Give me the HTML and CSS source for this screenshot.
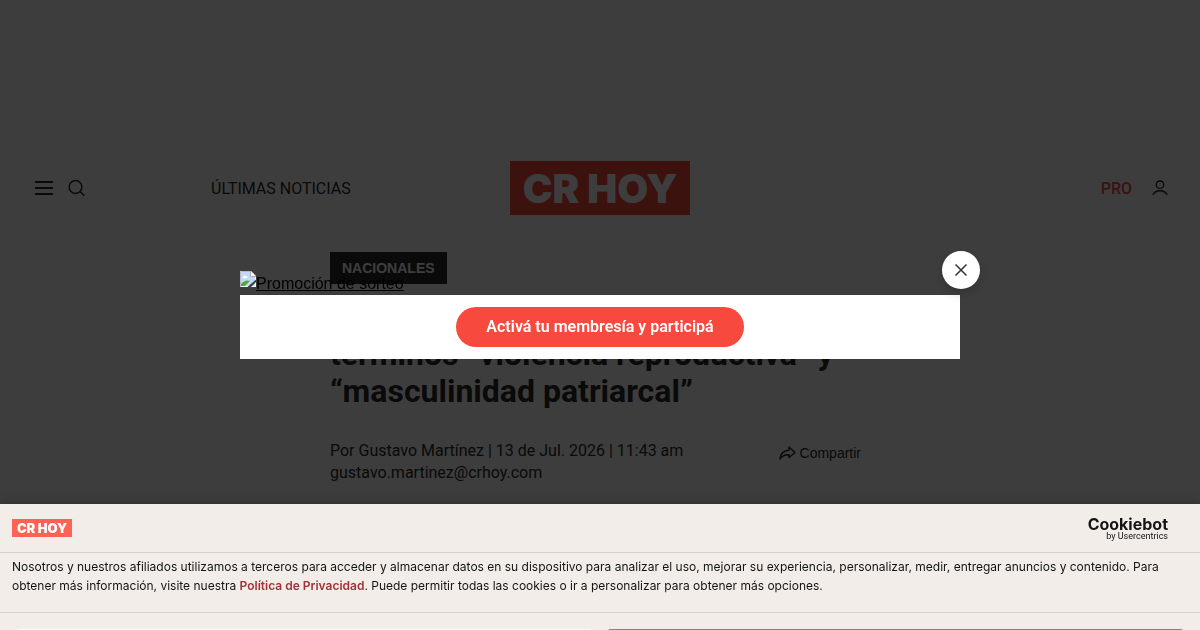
FILE: index.html
```html
<!DOCTYPE html>
<html lang="es">
<head>
<title>CR Hoy</title>
<meta charset="utf-8">
<meta name="viewport" content="width=device-width, initial-scale=1">
<link rel="stylesheet" href="styles.css">
</head>
<body>

<header class="site-header">
  <div class="header-left">
    <button class="icon-btn" type="button" aria-label="Menú">
      <svg width="18" height="16" viewBox="0 0 18 16"><path d="M0 2h18M0 8h18M0 14h18" stroke="currentColor" stroke-width="2"/></svg>
    </button>
    <button class="icon-btn" type="button" aria-label="Buscar">
      <svg width="18" height="18" viewBox="0 0 18 18" fill="none" stroke="currentColor" stroke-width="1.500"><circle cx="7.500" cy="8" r="6.400"/><path d="M12 12.500l4.300 4.300"/></svg>
    </button>
    <a class="nav-link" href="#">ÚLTIMAS NOTICIAS</a>
  </div>
  <a class="logo" href="#">CR HOY</a>
  <div class="header-right">
    <a class="pro" href="#">PRO</a>
    <button class="icon-btn" type="button" aria-label="Mi cuenta">
      <svg width="16" height="16" viewBox="0 0 16 16" fill="none" stroke="currentColor" stroke-width="1.400"><circle cx="8" cy="4.700" r="3.700"/><path d="M.8 14.800c1.500-2.500 4-4 7.200-4s5.700 1.500 7.200 4"/></svg>
    </button>
  </div>
</header>

<main class="article">
  <a class="tag" href="#">NACIONALES</a>
  <h1>términos “violencia reproductiva” y “masculinidad patriarcal”</h1>
  <div class="meta">
    <div class="author">
      <p>Por Gustavo Martínez | 13 de Jul. 2026 | 11:43 am</p>
      <p>gustavo.martinez@crhoy.com</p>
    </div>
    <button class="share" type="button">
      <svg width="17" height="14" viewBox="0 0 17 14" fill="none" stroke="currentColor" stroke-width="1.500" stroke-linejoin="round"><path d="M10 1l6 5.500-6 5V8.700C5.500 8.500 3 9.500 1 13c.3-5 3.500-8.500 9-8.800z"/></svg>
      Compartir
    </button>
  </div>
</main>

<div class="overlay">
  <div class="modal" role="dialog" aria-label="Promoción de sorteo">
    <a class="promo" href="#">
      <svg width="16" height="16" viewBox="0 0 16 16">
        <path d="M0 0h11l5 5v11H0z" fill="#fff"/>
        <path d="M1 1h9.500v4.500H15V15H1z" fill="#c3d9f7"/>
        <path d="M3 6c0-1.500 2-2 2.600-1 1.600-.3 2.400 1.500 1.200 2.300H3.500C2.700 7.200 2.500 6.500 3 6z" fill="#fff"/>
        <path d="M1 15v-2c2.500-3 6-4.500 9-3l-5 5z" fill="#54a944"/>
        <path d="M7.500 16L16 8.500V11l-5 5z" fill="#3d3d3d"/>
        <path d="M10.500 0v5.500H16" fill="#fff" stroke="#a9adb3"/>
        <path d="M.5 16V.5h10" fill="none" stroke="#b8bcc2"/>
      </svg><span>Promoción de sorteo</span>
    </a>
    <div class="modal-action">
      <a class="cta" href="#">Activá tu membresía y participá</a>
    </div>
    <button class="close" type="button" aria-label="Cerrar">
      <svg width="12" height="12" viewBox="0 0 12 12"><path d="M.5.500l11 11M11.500.500l-11 11" stroke="#333" stroke-width="1.500"/></svg>
    </button>
  </div>
</div>

<section class="cookies" aria-label="Cookies">
  <div class="cookies-top">
    <span class="logo-small">CR HOY</span>
    <a class="cookiebot" href="#">
      <span class="cookiebot-name">Cookiebot</span>
      <span class="cookiebot-by">by Usercentrics</span>
    </a>
  </div>
  <p class="cookies-text">Nosotros y nuestros afiliados utilizamos a terceros para acceder y almacenar datos en su dispositivo para analizar el uso, mejorar su experiencia, personalizar, medir, entregar anuncios y contenido. Para obtener más información, visite nuestra <a href="#">Política de Privacidad</a>. Puede permitir todas las cookies o ir a personalizar para obtener más opciones.</p>
  <div class="cookies-buttons">
    <button class="btn-light" type="button" aria-label="Personalizar"></button>
    <button class="btn-red" type="button" aria-label="Permitir todas"></button>
  </div>
</section>

</body>
</html>
```

FILE: styles.css
```css
* {
  box-sizing: border-box;
}

body {
  margin: 0;
  background: #fff;
  color: #2a2a2a;
  font-family: Roboto, "Liberation Sans", sans-serif;
  font-size: 16px;
  overflow: hidden;
}

a {
  color: inherit;
  text-decoration: none;
}

button {
  border: none;
  background: none;
  padding: 0;
  color: inherit;
  font-family: inherit;
  cursor: pointer;
}

svg {
  display: block;
}

/* Header */
.site-header {
  display: grid;
  grid-template-columns: 1fr auto 1fr;
  align-items: center;
  margin-top: 161px;
  padding: 0 32px;
}

.header-left {
  display: flex;
  align-items: center;
  gap: 15px;
  padding-left: 3px;
}

.nav-link {
  margin-left: 110px;
}

.logo {
  display: flex;
  align-items: center;
  justify-content: center;
  width: 180px;
  height: 54px;
  background: #f94b40;
  color: #fff;
  font-family: Inter, sans-serif;
  font-size: 40px;
  font-weight: 900;
}

.header-right {
  display: flex;
  align-items: center;
  justify-content: flex-end;
  gap: 20px;
}

.pro {
  color: #f94b40;
  font-weight: 500;
}

/* Article */
.article {
  max-width: 540px;
  margin: 37px auto 0;
}

.tag {
  display: inline-block;
  padding: 0 12px;
  background: #2a2a2a;
  color: #fff;
  font-family: "Liberation Sans", Arial, sans-serif;
  font-size: 14px;
  font-weight: bold;
  line-height: 32px;
}

h1 {
  margin: 52px 0 0;
  font-size: 32px;
  line-height: 37px;
}

.meta {
  display: flex;
  justify-content: space-between;
  align-items: flex-start;
  margin-top: 30px;
  padding-right: 9px;
}

.author p {
  margin: 0;
  line-height: 22px;
}

.share {
  display: flex;
  align-items: center;
  gap: 4px;
  font-family: "Liberation Sans", Arial, sans-serif;
  font-size: 14px;
  line-height: 26px;
}

/* Promo modal */
.overlay {
  position: fixed;
  inset: 0;
  display: flex;
  align-items: center;
  justify-content: center;
  background: rgba(0, 0, 0, 0.76);
}

.modal {
  position: relative;
  width: 90%;
  max-width: 720px;
}

.promo {
  display: flex;
  height: 24px;
  color: #000;
  font-family: "Liberation Sans", Arial, sans-serif;
  line-height: 26px;
  text-decoration: underline;
}

.modal-action {
  display: flex;
  justify-content: center;
  padding: 12px;
  background: #fff;
}

.cta {
  padding: 0 30px;
  border-radius: 20px;
  background: #f7493e;
  color: #fff;
  font-weight: 600;
  line-height: 40px;
}

.close {
  position: absolute;
  top: -20px;
  right: -20px;
  display: flex;
  align-items: center;
  justify-content: center;
  width: 38px;
  height: 38px;
  border-radius: 50%;
  background: #fff;
  box-shadow: 0 4px 12px rgba(0, 0, 0, 0.2);
}

/* Cookie banner */
.cookies {
  position: fixed;
  left: 0;
  right: 0;
  bottom: 0;
  height: 20vh;
  overflow: hidden;
  background: #f2ede9;
  color: #141414;
  box-shadow: 0 0 10px rgba(0, 0, 0, 0.3);
}

.cookies-top {
  display: flex;
  align-items: center;
  justify-content: space-between;
  height: 49px;
  padding: 0 32px 0 12px;
  border-bottom: 1px solid #d6d1ce;
}

.logo-small {
  width: 60px;
  background: #ff6154;
  color: #fff;
  font-family: Inter, sans-serif;
  font-size: 13px;
  font-weight: 900;
  line-height: 18px;
  text-align: center;
}

.cookiebot {
  display: flex;
  flex-direction: column;
  align-items: flex-end;
}

.cookiebot-name {
  font-family: Inter, sans-serif;
  font-size: 16px;
  font-weight: 700;
  line-height: 16px;
}

.cookiebot-by {
  font-family: Roboto, sans-serif;
  font-size: 9px;
  line-height: 9px;
}

.cookies-text {
  margin: 0;
  padding: 4px 12px 17px;
  border-bottom: 1px solid #d6d1ce;
  font-family: Inter, sans-serif;
  font-size: 12px;
  line-height: 19px;
}

.cookies-text a {
  color: #9e3236;
  font-weight: 600;
}

.cookies-buttons {
  display: flex;
  gap: 14px;
  padding: 16px;
}

.cookies-buttons button {
  flex: 1;
  height: 40px;
  border-radius: 4px;
}

.btn-light {
  background: #fff;
}

.btn-red {
  background: #e25a52;
}
```
